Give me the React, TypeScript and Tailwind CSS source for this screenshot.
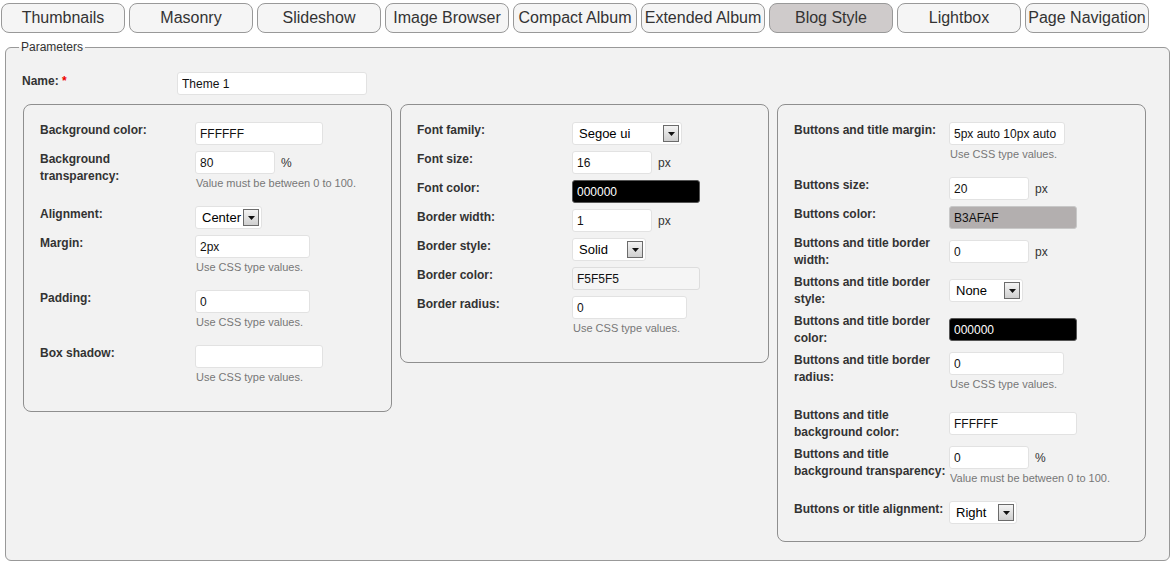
import type { ReactNode } from 'react';

const TABS = [
  'Thumbnails',
  'Masonry',
  'Slideshow',
  'Image Browser',
  'Compact Album',
  'Extended Album',
  'Blog Style',
  'Lightbox',
  'Page Navigation',
];

const inputBase =
  'h-[23px] border rounded-[3px] px-[4px] text-[12px] outline-none font-[inherit]';

function TextInput({
  value,
  w,
  tone = 'white',
}: {
  value: string;
  w: string;
  tone?: 'white' | 'black' | 'grey' | 'light';
}) {
  const toneCls =
    tone === 'black'
      ? 'bg-black text-white border-[#555]'
      : tone === 'grey'
        ? 'bg-[#b3afaf] text-[#111] border-[#c8c8c8]'
        : tone === 'light'
          ? 'bg-[#f5f5f5] text-[#111] border-[#dddddd]'
          : 'bg-white text-[#111] border-[#e2e2e2]';
  return <input readOnly value={value} className={`${inputBase} ${toneCls} ${w} block`} />;
}

function Select({ value, w }: { value: string; w: string }) {
  return (
    <div
      className={`${w} h-[23px] flex items-center justify-between bg-white border border-[#e2e2e2] rounded-[3px] pl-[6px] pr-[2px] text-[13px] text-black`}
    >
      <span>{value}</span>
      <span className="w-[16px] h-[17px] border border-[#6b6b6b] bg-gradient-to-b from-[#f4f4f4] to-[#cfcfcf] flex items-center justify-center">
        <svg width="7" height="4" viewBox="0 0 7 4">
          <path d="M0 0h7L3.5 4z" fill="#111" />
        </svg>
      </span>
    </div>
  );
}

function Unit({ children }: { children: ReactNode }) {
  return <span className="ml-[6px] text-[12px] text-[#333]">{children}</span>;
}

function Hint({ children }: { children: ReactNode }) {
  return <div className="mt-[3px] mb-[10px] ml-[1px] text-[11px] leading-[13px] text-[#777]">{children}</div>;
}

function Row({ label, hint, children }: { label: string[]; hint?: string; children: ReactNode }) {
  return (
    <div className="flex py-[2px]">
      <div className="w-[155px] shrink-0 self-start pt-[1px] text-[12px] font-bold leading-[17px] text-[#333]">
        {label.map((l) => (
          <span key={l} className="block whitespace-nowrap">
            {l}
          </span>
        ))}
      </div>
      <div className="self-center py-[1px]">
        <div className="flex items-center">{children}</div>
        {hint && <Hint>{hint}</Hint>}
      </div>
    </div>
  );
}

function Box({ children }: { children: ReactNode }) {
  return (
    <div className="w-[369px] border border-[#8f8f8f] rounded-[8px] bg-[#f2f2f2] pt-[14px] pb-[14px] pl-[16px] pr-[8px]">
      {children}
    </div>
  );
}

const CSS_HINT = 'Use CSS type values.';
const RANGE_HINT = 'Value must be between 0 to 100.';

export default function App() {
  return (
    <div className="min-h-screen bg-white font-['Liberation_Sans',Arial,sans-serif] pt-[3px]">
      <div className="flex gap-[4px] pl-[1px]">
        {TABS.map((t) => (
          <button
            key={t}
            type="button"
            className={`w-[124px] h-[30px] border border-[#999] rounded-[8px] text-[16px] leading-[18px] text-[#333] whitespace-nowrap ${
              t === 'Blog Style' ? 'bg-[#cfcbcb]' : 'bg-[#f5f5f5]'
            }`}
          >
            {t}
          </button>
        ))}
      </div>

      <fieldset className="ml-[5px] mr-[2px] mt-[7px] border border-[#999] rounded-[6px] bg-[#f2f2f2] pl-[16px] pr-[20px] pt-[17px] pb-[18px]">
        <legend className="-ml-[3px] px-[2px] text-[12px] leading-[14px] text-[#333]">Parameters</legend>

        <div className="flex items-start">
          <div className="w-[155px] pt-[2px] text-[12px] font-bold leading-[17px] text-[#333]">
            Name: <span className="text-[#e00]">*</span>
          </div>
          <div className="mt-[1px]">
            <TextInput value="Theme 1" w="w-[190px]" />
          </div>
        </div>

        <div className="flex items-start gap-[8px] mt-[9px] ml-[1px]">
          <Box>
            <Row label={['Background color:']}>
              <TextInput value="FFFFFF" w="w-[128px]" />
            </Row>
            <Row label={['Background', 'transparency:']} hint={RANGE_HINT}>
              <TextInput value="80" w="w-[80px]" />
              <Unit>%</Unit>
            </Row>
            <Row label={['Alignment:']}>
              <Select value="Center" w="w-[67px]" />
            </Row>
            <Row label={['Margin:']} hint={CSS_HINT}>
              <TextInput value="2px" w="w-[115px]" />
            </Row>
            <Row label={['Padding:']} hint={CSS_HINT}>
              <TextInput value="0" w="w-[115px]" />
            </Row>
            <Row label={['Box shadow:']} hint={CSS_HINT}>
              <TextInput value="" w="w-[128px]" />
            </Row>
          </Box>

          <Box>
            <Row label={['Font family:']}>
              <Select value="Segoe ui" w="w-[110px]" />
            </Row>
            <Row label={['Font size:']}>
              <TextInput value="16" w="w-[80px]" />
              <Unit>px</Unit>
            </Row>
            <Row label={['Font color:']}>
              <TextInput value="000000" w="w-[128px]" tone="black" />
            </Row>
            <Row label={['Border width:']}>
              <TextInput value="1" w="w-[80px]" />
              <Unit>px</Unit>
            </Row>
            <Row label={['Border style:']}>
              <Select value="Solid" w="w-[74px]" />
            </Row>
            <Row label={['Border color:']}>
              <TextInput value="F5F5F5" w="w-[128px]" tone="light" />
            </Row>
            <Row label={['Border radius:']} hint={CSS_HINT}>
              <TextInput value="0" w="w-[115px]" />
            </Row>
          </Box>

          <Box>
            <Row label={['Buttons and title margin:']} hint={CSS_HINT}>
              <TextInput value="5px auto 10px auto" w="w-[116px]" />
            </Row>
            <Row label={['Buttons size:']}>
              <TextInput value="20" w="w-[80px]" />
              <Unit>px</Unit>
            </Row>
            <Row label={['Buttons color:']}>
              <TextInput value="B3AFAF" w="w-[128px]" tone="grey" />
            </Row>
            <Row label={['Buttons and title border', 'width:']}>
              <TextInput value="0" w="w-[80px]" />
              <Unit>px</Unit>
            </Row>
            <Row label={['Buttons and title border', 'style:']}>
              <Select value="None" w="w-[74px]" />
            </Row>
            <Row label={['Buttons and title border', 'color:']}>
              <TextInput value="000000" w="w-[128px]" tone="black" />
            </Row>
            <Row label={['Buttons and title border', 'radius:']} hint={CSS_HINT}>
              <TextInput value="0" w="w-[115px]" />
            </Row>
            <Row label={['Buttons and title', 'background color:']}>
              <TextInput value="FFFFFF" w="w-[128px]" />
            </Row>
            <Row label={['Buttons and title', 'background transparency:']} hint={RANGE_HINT}>
              <TextInput value="0" w="w-[80px]" />
              <Unit>%</Unit>
            </Row>
            <Row label={['Buttons or title alignment:']}>
              <Select value="Right" w="w-[68px]" />
            </Row>
          </Box>
        </div>
      </fieldset>
    </div>
  );
}
